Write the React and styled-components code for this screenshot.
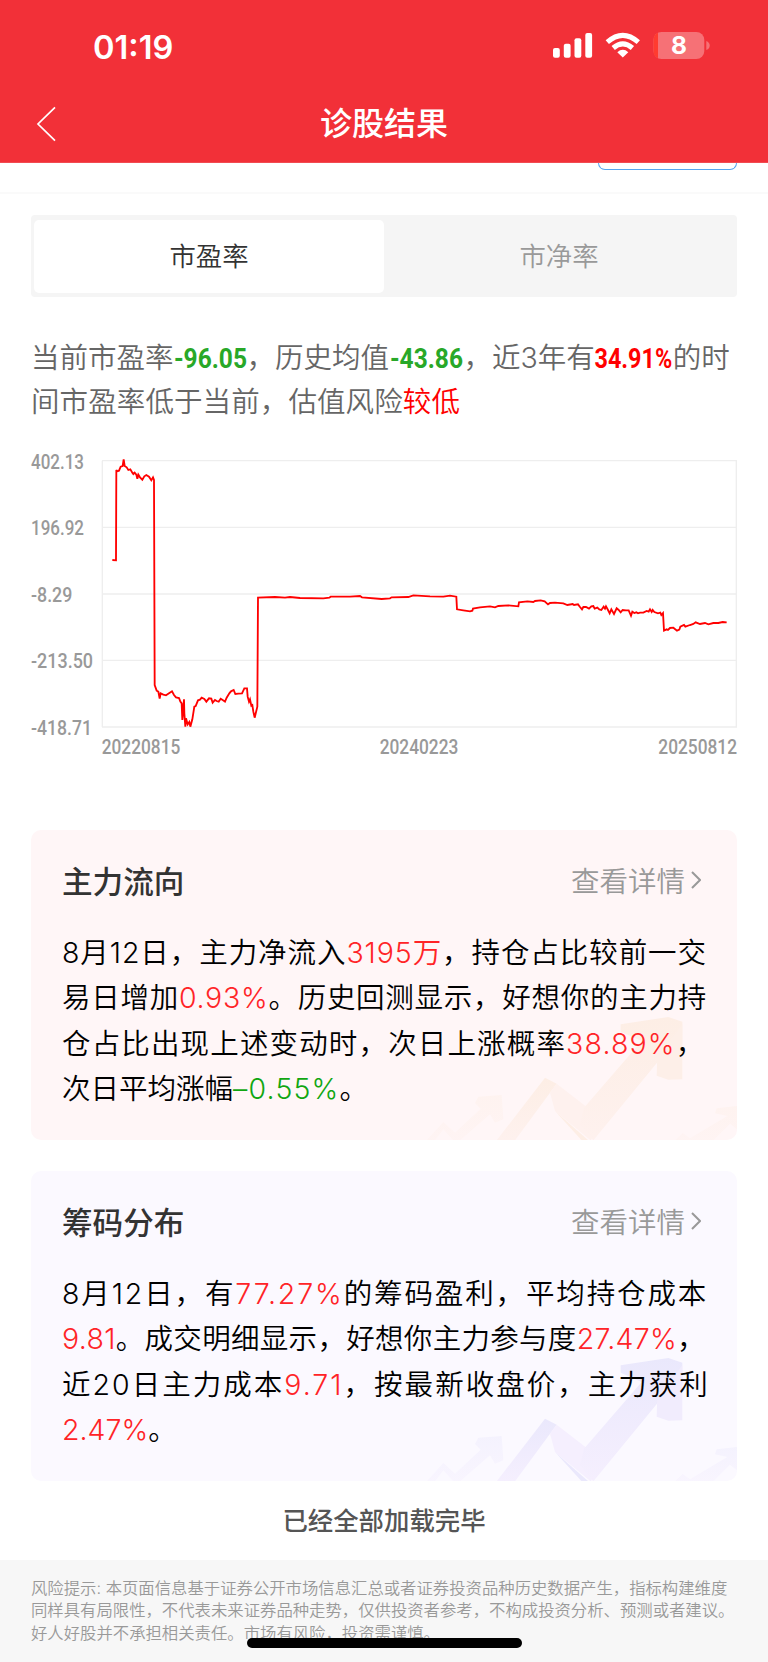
import React from "react";
import styled, { createGlobalStyle } from "styled-components";

const GlobalStyle = createGlobalStyle`
    * {
        box-sizing:border-box;
    }
    body {
        margin:0;
        background:#fff;
        font-family:Inter, "Noto Sans CJK SC", sans-serif;
    }
`;

const Page = styled.div`
    position:relative;
    width:768px;
    height:1662px;
    overflow:hidden;
    background:#fff;
`;

const Header = styled.header`
    height:163px;
    background:#f23038;
    border-bottom:1px solid #f14b52;
    color:#fff;
`;

const StatusBar = styled.div`
    display:flex;
    justify-content:space-between;
    align-items:center;
    height:92px;
    padding:0 58px 0 93px;
`;

const Time = styled.span`
    padding-top:2px;
    font-size:32.6px;
    font-weight:600;
    line-height:40px;
`;

const StatusIcons = styled.svg`
    display:block;
    overflow:visible;
`;

const NavBar = styled.div`
    display:grid;
    grid-template-columns:80px 1fr 80px;
    align-items:center;
    height:64px;
`;

const BackIcon = styled.svg`
    margin-left:36px;
`;

const PageTitle = styled.h1`
    margin:0;
    font-size:32px;
    font-weight:500;
    line-height:40px;
    text-align:center;
`;

const Clipped = styled.div`
    display:flex;
    justify-content:flex-end;
    height:31px;
    padding-right:31px;
    border-bottom:2px solid #fafafa;
`;

const ClippedButton = styled.div`
    width:139px;
    height:7px;
    border:1px solid #55a5f0;
    border-top:none;
    border-radius:0 0 7px 7px;
`;

const Tabs = styled.div`
    display:flex;
    height:82px;
    margin:21px 31px 0;
    padding:5px 3px 4px;
    border-radius:4px;
    background:#f5f5f5;
`;

const Tab = styled.div`
    flex:1;
    display:flex;
    align-items:center;
    justify-content:center;
    padding-bottom:4px;
    border-radius:5px;
    font-size:26.4px;
    font-weight:350;
    background:${props => props.$active ? "#fff" : "transparent"};
    color:${props => props.$active ? "#333" : "#999"};
`;

const Summary = styled.div`
    margin:39px 31px 0;
    font-size:28.5px;
    font-weight:350;
    line-height:43.4px;
    color:#666;
    white-space:nowrap;
`;

const Line = styled.div`
    letter-spacing:${props => props.$spacing || 0}px;
    white-space:nowrap;
`;

const Mark = styled.span`
    color:${props => props.$color};
    ${props => props.$spacing ? `letter-spacing:${props.$spacing}px;` : ""}
`;

const Figure = styled.span`
    display:inline-flex;
    justify-content:center;
    width:${props => props.$width}px;
    color:${props => props.$color};
    font-family:Roboto, sans-serif;
    font-weight:700;
    span {
        transform:scaleX(${props => props.$stretch || 0.86});
    }
`;

const Chart = styled.svg`
    display:block;
    margin:16px 31px 0;
    overflow:visible;
`;

const Card = styled.section`
    position:relative;
    height:310px;
    margin:${props => props.$top}px 31px 0;
    padding:27px 31px 0;
    border-radius:10px;
    overflow:hidden;
    background:${props => props.$bg};
`;

const CardHead = styled.div`
    display:flex;
    align-items:center;
    justify-content:space-between;
    height:46px;
    padding-right:5px;
`;

const CardTitle = styled.h2`
    margin:0;
    font-size:30.6px;
    font-weight:500;
    color:#333;
`;

const More = styled.div`
    display:flex;
    align-items:center;
    gap:6px;
    font-size:28.5px;
    font-weight:350;
    color:#999;
`;

const CardBody = styled.div`
    position:relative;
    margin-top:27px;
    font-size:28.5px;
    font-weight:350;
    line-height:45.4px;
    color:#000;
`;

const Arrows = styled.svg`
    position:absolute;
    right:0;
    bottom:0;
`;

const Loaded = styled.p`
    height:79px;
    margin:0;
    font-size:25.4px;
    font-weight:500;
    line-height:80px;
    text-align:center;
    color:#555;
`;

const Footer = styled.footer`
    height:102px;
    padding:17px 31px 0;
    background:#f7f7f7;
    font-size:16.37px;
    font-weight:350;
    line-height:22.4px;
    color:#999;
`;

const HomeIndicator = styled.div`
    position:absolute;
    left:247px;
    bottom:14px;
    width:275px;
    height:10px;
    border-radius:5px;
    background:#000;
`;

const RED = "#ff2427";
const GREEN = "#11a611";

// chart space is three units per pixel
const GRID_LINES = [62, 262, 462, 661, 861];
const Y_LABELS = [
    { text: "402.13", y: 86, width: 159 },
    { text: "196.92", y: 285, width: 159 },
    { text: "-8.29", y: 486, width: 124 },
    { text: "-213.50", y: 685, width: 186 },
    { text: "-418.71", y: 884, width: 183 }
];
const X_LABELS = [
    { text: "20220815", x: 305 },
    { text: "20240223", x: 1139 },
    { text: "20250812", x: 1975 }
];

const RATIO_LINE = `337,360 348,361 349,90 351,94 357,92 362,80 368,78 371,58 374,78 380,82 385,90 391,88
397,98 400,102 404,98 409,104 412,116 415,104 420,112 427,119 433,109 439,105 447,110 454,121 459,112
462,120 464,735 470,752 475,755 479,776 482,760 490,764 498,766 507,760 516,754 522,765 528,772 537,774
541,785 545,790 547,840 552,778 553,820 556,860 558,835 563,853 568,846 571,860 577,838 583,800 587,798
594,781 600,779 605,773 613,777 619,785 627,775 634,776 638,788 645,780 650,783 656,785 662,776 668,780
675,785 680,773 688,760 693,754 701,750 706,762 715,761 726,760 733,745 741,745 743,770 747,785 750,778
754,797 757,795 760,815 764,833 772,800 774,473 825,471 855,473 870,471 900,474 970,475 988,473 992,470
1050,470 1080,468 1086,472 1145,477 1170,475 1175,472 1225,471 1240,466 1290,469 1330,470 1350,467
1369,470 1371,508 1390,511 1410,514 1417,512 1419,506 1440,502 1470,499 1485,502 1495,498 1525,496
1555,499 1557,487 1582,484 1600,486 1605,483 1622,481 1634,484 1644,493 1650,489 1665,488 1690,490
1702,495 1718,492 1722,495 1734,493 1740,501 1746,508 1750,501 1758,501 1767,506 1774,499 1780,498
1784,506 1792,503 1798,508 1804,510 1811,500 1815,506 1818,499 1824,510 1829,520 1834,508 1842,522
1850,505 1856,510 1862,517 1868,510 1878,511 1886,511 1893,527 1897,515 1903,519 1909,517 1914,520
1920,518 1930,518 1940,513 1946,515 1950,508 1955,516 1958,510 1963,516 1974,520 1981,518 1984,525
1989,519 1992,572 2000,568 2004,570 2010,564 2020,563 2031,572 2038,569 2041,560 2052,555 2056,560
2070,555 2080,552 2087,547 2100,552 2115,549 2125,553 2140,549 2155,549 2168,546 2180,547`;

const RatioChart = () => (
    <Chart width="706" height="330" viewBox="93 0 2118 990">
        <g stroke="#eee" strokeWidth="4">
            {GRID_LINES.map(y => <line key={y} x1="306" x2="2211" y1={y} y2={y} />)}
            <line x1="307" x2="307" y1="62" y2="861" />
            <line x1="2209" x2="2209" y1="62" y2="861" />
        </g>
        <g fill="#999" fontFamily="Roboto, sans-serif" fontSize="61" fontWeight="500">
            {Y_LABELS.map(({ text, y, width }) => (
                <text key={text} x="93" y={y} textLength={width} lengthAdjust="spacingAndGlyphs">{text}</text>
            ))}
            {X_LABELS.map(({ text, x }) => (
                <text key={text} x={x} y="941" textLength="236" lengthAdjust="spacingAndGlyphs">{text}</text>
            ))}
        </g>
        <polyline points={RATIO_LINE} fill="none" stroke="#ff0000" strokeWidth="5.5" strokeLinejoin="miter" />
    </Chart>
);

const TrendArrows = ({ id, from, to, side }) => (
    <Arrows width="314" height="126" viewBox="129 609 942 378">
        <defs>
            <linearGradient id={id} x1="0" y1="0" x2="0" y2="1">
                <stop offset="0" stopColor={from} />
                <stop offset="1" stopColor={to} />
            </linearGradient>
        </defs>
        <path d="M350 988 495 800 530 818 405 988Z" fill={`url(#${id})`} />
        <path d="M530 818 625 892 665 940 632 988 525 900 510 845Z" fill={to} />
        <path d="M525 900 625 988 605 988Z" fill={from} />
        <path d="M612 890 785 690 722 662 722 640 865 618 907 632 907 700 860 720 640 988 600 940Z" fill={`url(#${id})`} />
        <path d="M832 730 870 690 907 640 907 805 865 806 830 794Z" fill={side} />
        <g opacity="0.4">
            <path d="M140 988 190 933 225 965 302 893 285 876 295 857 365 852 370 925 345 935 330 910 240 988 220 988 190 955 165 988Z" fill={`url(#${id})`} />
            <path d="M885 988 908 966 930 982 1042 915 1005 907 1010 892 1071 885 1071 955 1050 938 1000 988Z" fill={`url(#${id})`} />
        </g>
    </Arrows>
);

const InfoCard = ({ title, top, bg, art, children }) => (
    <Card $top={top} $bg={bg}>
        <TrendArrows {...art} />
        <CardHead>
            <CardTitle>{title}</CardTitle>
            <More>
                查看详情
                <svg width="10" height="18" viewBox="0 0 10 18" fill="none" stroke="#999" strokeWidth="2">
                    <path d="M1 1 9 9 1 17" />
                </svg>
            </More>
        </CardHead>
        <CardBody>{children}</CardBody>
    </Card>
);

const App = () => (
    <>
        <GlobalStyle />
        <Page>
            <Header>
                <StatusBar>
                    <Time>01:19</Time>
                    <StatusIcons width="158" height="28" viewBox="552 32 158 28">
                        <g fill="#fff">
                            <rect x="553" y="48" width="6.8" height="9.8" rx="2" />
                            <rect x="563.8" y="43.8" width="6.8" height="14" rx="2" />
                            <rect x="574.5" y="38.2" width="6.8" height="19.6" rx="2" />
                            <rect x="585.3" y="33" width="6.8" height="24.8" rx="2" />
                            <path d="M622.8 57.6 617.3 52.2Q622.8 47.4 628.3 52.2Z" />
                        </g>
                        <g fill="none" stroke="#fff" strokeWidth="5">
                            <path d="M607.3 42.1Q622.8 28.6 638.3 42.1" />
                            <path d="M613.2 48Q622.8 39.6 632.4 48" />
                        </g>
                        <rect x="653.5" y="32" width="50.8" height="27" rx="8" fill="#f67176" />
                        <path d="M658 32.8Q653.5 34.5 653.5 40V51Q653.5 56.5 658 58.2Z" fill="#ff3b30" />
                        <path d="M706.3 41Q709.7 42.5 709.7 45.5T706.3 50Z" fill="#f67176" />
                        <text x="679" y="54.4" fill="#fff" textAnchor="middle" fontFamily="Inter, sans-serif" fontSize="24.5" fontWeight="700">8</text>
                    </StatusIcons>
                </StatusBar>
                <NavBar>
                    <BackIcon width="20" height="36" viewBox="0 0 20 36" fill="none" stroke="#fff" strokeWidth="1.7">
                        <path d="M19 1.3 2 18 19 34.7" />
                    </BackIcon>
                    <PageTitle>诊股结果</PageTitle>
                </NavBar>
            </Header>
            <Clipped>
                <ClippedButton />
            </Clipped>
            <Tabs>
                <Tab $active>市盈率</Tab>
                <Tab>市净率</Tab>
            </Tabs>
            <Summary>
                <Line>
                    当前市盈率<Figure $width={73} $color="#28a828"><span>-96.05</span></Figure>，历史均值<Figure $width={74.5} $color="#28a828"><span>-43.86</span></Figure>，近3年有<Figure $width={78} $color="#ff0000" $stretch={0.82}><span>34.91%</span></Figure>的时
                </Line>
                <Line $spacing={0.1}>间市盈率低于当前，估值风险<Mark $color="#ff0000">较低</Mark></Line>
            </Summary>
            <RatioChart />
            <InfoCard
                title="主力流向"
                top={60}
                bg="#fff6f7"
                art={{ id: "flow", from: "#fdeee5", to: "#fef1ee", side: "#fdefe8" }}
            >
                <Line $spacing={0.93}>8月12日，主力净流入<Mark $color={RED}>3195万</Mark>，持仓占比较前一交</Line>
                <Line $spacing={0.73}>易日增加<Mark $color={RED}>0.93%</Mark>。历史回测显示，好想你的主力持</Line>
                <Line $spacing={1.15}>仓占比出现上述变动时，次日上涨概率<Mark $color={RED}>38.89%</Mark>，</Line>
                <Line>次日平均涨幅<Mark $color={GREEN} $spacing={1.2}>–0.55%</Mark>。</Line>
            </InfoCard>
            <InfoCard
                title="筹码分布"
                top={31}
                bg="#fbf9ff"
                art={{ id: "chips", from: "#eae8fc", to: "#f5effe", side: "#f1ecfd" }}
            >
                <Line $spacing={1.88}>8月12日，有<Mark $color={RED}>77.27%</Mark>的筹码盈利，平均持仓成本</Line>
                <Line $spacing={0.31}>
                    <Mark $color={RED}>9.81</Mark>。成交明细显示，好想你主力参与度<Mark $color={RED}>27.47%</Mark>，
                </Line>
                <Line $spacing={2.02}>近20日主力成本<Mark $color={RED}>9.71</Mark>，按最新收盘价，主力获利</Line>
                <Line><Mark $color={RED}>2.47%</Mark>。</Line>
            </InfoCard>
            <Loaded>已经全部加载完毕</Loaded>
            <Footer>
                <Line>风险提示: 本页面信息基于证券公开市场信息汇总或者证券投资品种历史数据产生，指标构建维度</Line>
                <Line>同样具有局限性，不代表未来证券品种走势，仅供投资者参考，不构成投资分析、预测或者建议。</Line>
                <Line>好人好股并不承担相关责任。市场有风险，投资需谨慎。</Line>
            </Footer>
            <HomeIndicator />
        </Page>
    </>
);

export default App;
